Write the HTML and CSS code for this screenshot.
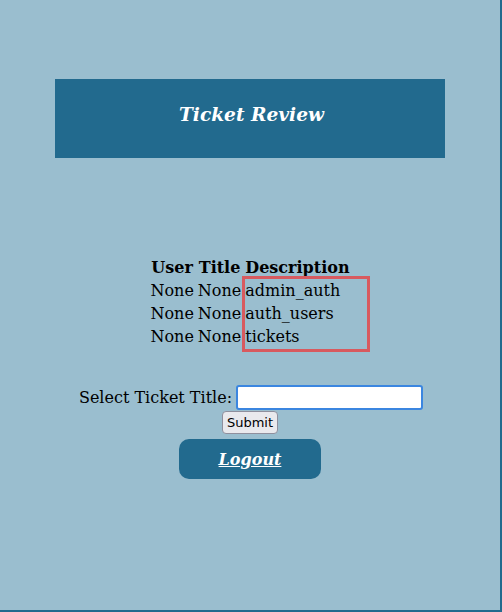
FILE: index.html
```html
<!DOCTYPE html>
<html lang="en">
<head>
    <meta charset="UTF-8">
    <meta name="viewport" content="width=device-width, initial-scale=1.0">
    <title>Ticket Review</title>
    <link rel="stylesheet" href="styles.css">
</head>
<body>
    <div class="page">
        <div class="header">
            <h1 class="title">Ticket Review</h1>
        </div>

        <div class="results">
            <table class="tickets">
                <thead>
                    <tr>
                        <th>User</th>
                        <th>Title</th>
                        <th>Description</th>
                    </tr>
                </thead>
                <tbody>
                    <tr>
                        <td>None</td>
                        <td>None</td>
                        <td>admin_auth</td>
                    </tr>
                    <tr>
                        <td>None</td>
                        <td>None</td>
                        <td>auth_users</td>
                    </tr>
                    <tr>
                        <td>None</td>
                        <td>None</td>
                        <td>tickets</td>
                    </tr>
                </tbody>
            </table>
            <div class="highlight"></div>
        </div>

        <form class="ticket-form" onsubmit="return false;">
            <div class="form-row">
                <label for="title">Select Ticket Title:</label>
                <input type="text" id="title" name="title" class="title-input">
            </div>
            <button type="submit" class="submit-btn">Submit</button>
        </form>

        <a href="#" class="logout-btn">Logout</a>
    </div>
</body>
</html>
```

FILE: styles.css
```css
* {
    box-sizing: border-box;
}

html {
    background: #216a8e;
}

body {
    margin: 0;
    width: 500px;
    height: 610px;
    background: #9abecf;
    font-family: 'DejaVu Serif', serif;
    font-size: 16px;
    color: #000;
    overflow: hidden;
}

.page {
    display: flex;
    flex-direction: column;
    align-items: center;
    padding-top: 79px;
}

.header {
    width: 390px;
    height: 79px;
    padding-bottom: 9px;
    padding-left: 3px;
    background: #226a8e;
    display: flex;
    align-items: center;
    justify-content: center;
}

.title {
    margin: 0;
    color: #fff;
    font-size: 18.6px;
    font-weight: bold;
    font-style: italic;
}

.results {
    position: relative;
    margin-top: 97px;
}

.tickets th {
    font-weight: bold;
}

.highlight {
    position: absolute;
    left: 95px;
    top: 21px;
    width: 128px;
    height: 76px;
    border: 3px solid #d85a5f;
}

.ticket-form {
    margin-top: 36px;
    display: flex;
    flex-direction: column;
    align-items: center;
}

.form-row {
    display: flex;
    align-items: center;
    margin-left: 2px;
}

.form-row label {
    margin-right: 4px;
}

.title-input {
    width: 187px;
    height: 25px;
    border: 2px solid #3b86e0;
    border-radius: 3px;
    background: #fff;
    outline: none;
    padding: 2px 4px;
}

.submit-btn {
    margin-top: 1px;
    height: 23px;
    padding: 0 4px;
    font-family: 'DejaVu Sans', sans-serif;
    font-size: 13px;
    color: #000;
    background: #e9e9ed;
    border: 1px solid #8f8f9d;
    border-radius: 4px;
}

.logout-btn {
    margin-top: 5px;
    width: 142px;
    height: 40px;
    display: flex;
    align-items: center;
    justify-content: center;
    background: #226a8e;
    border-radius: 10px;
    color: #fff;
    font-size: 16px;
    font-weight: bold;
    font-style: italic;
    text-decoration: underline;
}
```
